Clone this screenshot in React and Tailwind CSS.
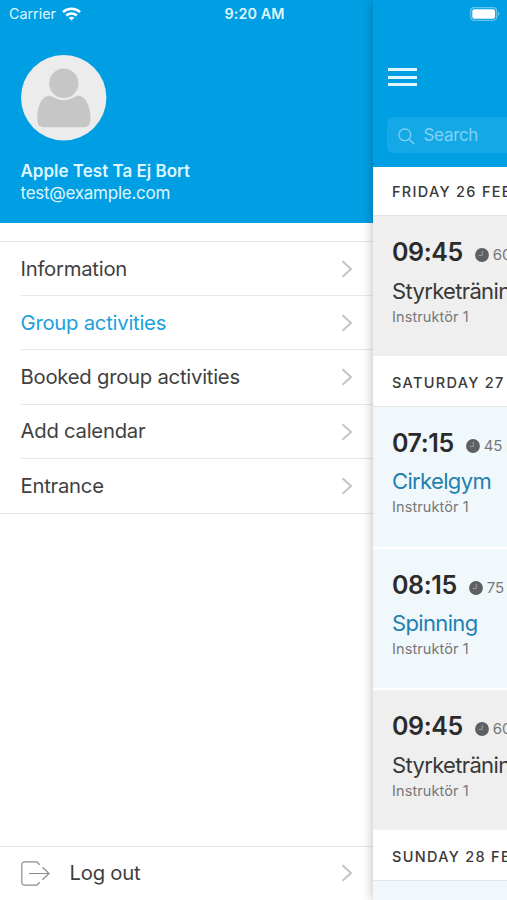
import React from "react";

const menuItems = [
  { label: "Information" },
  { label: "Group activities", active: true },
  { label: "Booked group activities" },
  { label: "Add calendar" },
  { label: "Entrance" },
];

const days = [
  {
    title: "FRIDAY 26 FEBRUARY",
    sessions: [{ time: "09:45", minutes: "60 min", name: "Styrketräning", full: true }],
  },
  {
    title: "SATURDAY 27 FEBRUARY",
    sessions: [
      { time: "07:15", minutes: "45 min", name: "Cirkelgym" },
      { time: "08:15", minutes: "75 min", name: "Spinning" },
      { time: "09:45", minutes: "60 min", name: "Styrketräning", full: true },
    ],
  },
  {
    title: "SUNDAY 28 FEBRUARY",
    sessions: [{ time: "10:00", minutes: "60 min", name: "Spinning" }],
  },
];

function Chevron() {
  return (
    <svg width="12" height="18" viewBox="0 0 12 18" fill="none" stroke="#c4c4c6" strokeWidth="2">
      <path d="M1.500 1.200L10 9l-8.500 7.800" />
    </svg>
  );
}

function StatusBar() {
  return (
    <div className="absolute inset-x-0 top-0 z-20 flex h-[27px] items-center justify-between pl-[9px] pr-[7px] text-[14.300px] text-[#dff6ff]">
      <div className="flex w-[120px] items-center gap-[6px]">
        <span>Carrier</span>
        <svg width="19" height="14" viewBox="0 0 19 14" fill="none" stroke="white" strokeWidth="2.500">
          <path d="M1 5.200C5.700.700 13.300.700 18 5.200" />
          <path d="M4.200 8.500c3-2.800 7.600-2.800 10.600 0" />
          <path d="M9.500 13.600L6.700 10.800c1.500-1.400 4.100-1.400 5.600 0z" fill="white" stroke="none" />
        </svg>
      </div>
      <span className="font-semibold tracking-[0.100px]">9:20 AM</span>
      <div className="flex w-[120px] justify-end">
        <svg width="30" height="14" viewBox="0 0 30 14" fill="none">
          <rect x="0.700" y="0.700" width="26" height="12.600" rx="3.500" stroke="#66c5ef" strokeWidth="1.200" />
          <rect x="2.300" y="2.300" width="22.800" height="9.400" rx="2" fill="white" />
          <path d="M28 4.800c1.800.6 1.800 3.800 0 4.400z" fill="#66c5ef" />
        </svg>
      </div>
    </div>
  );
}

function Avatar() {
  return (
    <svg width="86" height="86" viewBox="0 0 86 86">
      <circle cx="42.700" cy="42.700" r="42.700" fill="#ececec" />
      <circle cx="42.800" cy="28.300" r="14.700" fill="#c6c6c6" />
      <path
        d="M28 40.700C20.500 41.200 16.200 51.700 16.200 63.700c0 6 2 8.500 7.500 8.500h38c5.500 0 7.800-2.500 7.800-8.500C69.500 51.700 65 41.200 57.500 40.700c-2 0-2.800.6-4.300 1.600-6.500 4-14.300 4-20.800 0-1.500-1-2.400-1.600-4.400-1.600z"
        fill="#c6c6c6"
      />
    </svg>
  );
}

function Drawer() {
  return (
    <aside className="flex w-[372.500px] shrink-0 flex-col bg-white">
      <div className="h-[223px] bg-[#009fe3] pl-[20.500px] pt-[54.500px]">
        <Avatar />
        <div className="mt-[19px] text-[17px] leading-[22.500px] text-[#dff6ff]">
          <p className="font-semibold">Apple Test Ta Ej Bort</p>
          <p className="tracking-[-0.250px]">test@example.com</p>
        </div>
      </div>

      <nav className="mt-[18px] border-y border-[#e8e8e8] pl-[20.500px]">
        {menuItems.map((item) => (
          <a
            key={item.label}
            className={`flex h-[54.200px] items-center justify-between border-b border-[#e8e8e8] pr-[20px] pt-px text-[20.300px] tracking-[-0.250px] last:border-b-0 ${
              item.active ? "text-[#1ba1dc]" : "text-[#3f3f3f]"
            }`}
          >
            {item.label}
            <Chevron />
          </a>
        ))}
      </nav>

      <a className="mt-auto flex h-[54px] items-center border-t border-[#e8e8e8] pb-px pl-[20.500px] pr-[20px] text-[20.300px] tracking-[-0.250px] text-[#3f3f3f]">
        <svg width="29" height="25" viewBox="0 0 29 25" fill="none" stroke="#8c8c8c" strokeWidth="1.200">
          <path d="M18.300 4V3.300L16 .8H3.500A2.700 2.700 0 0 0 .8 3.500v18a2.700 2.700 0 0 0 2.700 2.700H16l2.300-2.500V21" />
          <path d="M8 12.500h20M21.500 6.200l6.500 6.300-6.500 6.300" />
        </svg>
        <span className="ml-5 flex-1">Log out</span>
        <Chevron />
      </a>
    </aside>
  );
}

function Session({ session }) {
  return (
    <div
      className={`h-[141.600px] border-b-[2.500px] border-white pl-[19.500px] pt-[20.800px] ${
        session.full ? "bg-[#efefef]" : "bg-[#f0f8fb]"
      }`}
    >
      <div className="flex h-[32px] items-center">
        <span className="text-[25px] font-semibold tracking-[-0.400px] text-[#2b2b2b]">{session.time}</span>
        <svg className="ml-[12px] mt-[4px]" width="14" height="14" viewBox="0 0 15 15">
          <circle cx="7.500" cy="7.500" r="7.400" fill="#5d5f61" />
          <path d="M7.800 3v5H4" fill="none" stroke="#a5a7a8" strokeWidth="1" />
        </svg>
        <span className="ml-[4px] mt-[5px] text-[15px] tracking-[-0.200px] text-[#777]">{session.minutes}</span>
      </div>
      <p
        className={`mt-[6.500px] text-[22px] leading-[30px] tracking-[-0.650px] ${
          session.full ? "text-[#383838]" : "text-[#1f80b2]"
        }`}
      >
        {session.name}
      </p>
      <p className="mt-px text-[14.500px] leading-5 tracking-[0.100px] text-[#777]">Instruktör 1</p>
    </div>
  );
}

function Schedule() {
  return (
    <main className="relative z-10 w-[414px] shrink-0 bg-white shadow-[0_0_11px_rgba(0,0,0,0.280)]">
      <header className="h-[167px] bg-[#009fe3] pl-[14px] pt-[68px]">
        <div className="ml-[1.500px] flex w-[29px] flex-col gap-[4.500px]">
          <span className="h-[3px] bg-[#dff6ff]" />
          <span className="h-[3px] bg-[#dff6ff]" />
          <span className="h-[3px] bg-[#dff6ff]" />
        </div>
        <div className="mt-[31px] flex h-9 w-[385px] items-center rounded-md bg-[#15a8e6] pl-[11px] pt-[2px] text-[17px] tracking-[-0.300px] text-[#82d2f4]">
          <svg width="17" height="17" viewBox="0 0 17 17" fill="none" stroke="currentColor" strokeWidth="1.300">
            <circle cx="6.800" cy="6.800" r="5.900" />
            <path d="M11 11l5.300 5.300" />
          </svg>
          <span className="ml-[9px]">Search</span>
        </div>
      </header>

      {days.map((day) => (
        <section key={day.title}>
          <h2 className="flex h-[49.300px] items-center border-b border-[#e2e6e8] pl-[19.500px] pt-[2px] text-[14.500px] font-medium tracking-[1.300px] text-[#3a3a3a]">
            {day.title}
          </h2>
          {day.sessions.map((session) => (
            <Session key={session.time} session={session} />
          ))}
        </section>
      ))}
    </main>
  );
}

export default function App() {
  return (
    <div className="relative flex h-[900px] w-[507px] overflow-hidden whitespace-nowrap bg-white font-['Inter',sans-serif]">
      <StatusBar />
      <Drawer />
      <Schedule />
    </div>
  );
}
